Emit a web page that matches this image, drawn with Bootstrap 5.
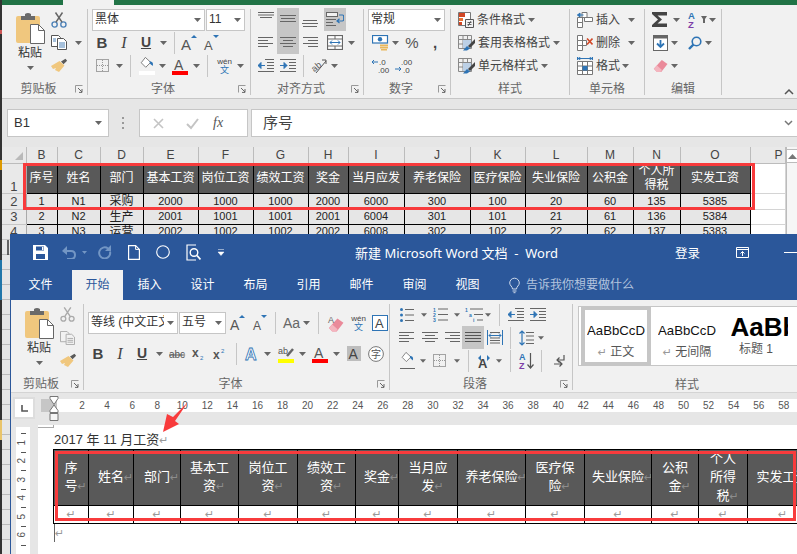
<!doctype html>
<html lang="zh-CN">
<head>
<meta charset="utf-8">
<title>Excel 与 Word</title>
<link href="https://cdn.jsdelivr.net/npm/bootstrap@5.3.0/dist/css/bootstrap.min.css" rel="stylesheet">
<style>
html,body{margin:0;height:100%;background:#2a2a2a;overflow:hidden}
.stage{position:relative;width:797px;height:554px;overflow:hidden;font:12px/1.2 "Liberation Sans","Noto Sans CJK SC",sans-serif;color:#444;background:linear-gradient(#333 0 30px,#c55 30px 34px,#333 34px 160px,#d90 160px 170px,#333 170px 260px,#27a 260px 300px,#333 300px 420px,#e9c46a 420px 440px,#333 440px)}
svg{display:block;flex-shrink:0;overflow:visible}
.l1{margin-left:1px}.l2{margin-left:2px}.l3{margin-left:3px}.l4{margin-left:4px}.l5{margin-left:5px}.l6{margin-left:6px}.l7{margin-left:7px}.l8{margin-left:8px}.l9{margin-left:9px}.l10{margin-left:10px}.l11{margin-left:11px}.l12{margin-left:12px}.l13{margin-left:13px}.l14{margin-left:14px}.l16{margin-left:16px}.l17{margin-left:17px}.l22{margin-left:22px}
.u14{width:14px}.u16{width:16px}.u18{width:18px}.u22{width:22px}
.xlw{margin-left:2px;width:795px;height:554px;display:flex;flex-direction:column;background:#e6e6e6}
.xtop{height:5px;display:flex;background:#217346;flex-shrink:0}
.xtab{width:51px;margin-left:61px;background:#f1f1f1}
.rib{height:94px;flex-shrink:0;display:flex;padding-top:3px;background:#f1f1f1;border-bottom:1px solid #c6c6c6}
.rg{height:86px;flex-shrink:0;border-right:1px solid #c6c6c6;margin-top:1px}
.rb{height:69px;margin-top:-1px}
.rl{display:flex;align-items:center;height:14px;margin-top:5px;color:#666}
.rlt{flex:1;text-align:center}
.rl svg{margin-right:4px}
.rr{display:flex;align-items:center;height:23px}
.rr2{display:flex;align-items:center;height:31px}
.tx{display:flex;align-items:center;justify-content:center;height:23px;flex-shrink:0}
.bi{font-weight:700;font-size:15px;color:#444}
.ii{font-style:italic;font-family:"Liberation Serif",serif;font-size:16px;color:#444}
.ui{font-weight:700;font-size:14px;text-decoration:underline;color:#444}
.on{background:#c6c6c6}
.vs{width:1px;height:22px;background:#c6c6c6;flex-shrink:0}
.sel{display:flex;align-items:center;height:22px;background:#fff;border:1px solid #c6c6c6;padding-left:2px;overflow:hidden;color:#333;flex-shrink:0}
.sel>span{flex:1;white-space:nowrap;overflow:hidden}
.sel>svg{margin:0 3px 0 3px}
.s113{width:113px}.s39{width:39px}.s77{width:77px}.s90{width:90px}.s47{width:47px}
.pcol{width:30px;display:flex;flex-direction:column;align-items:center;margin-left:13px;flex-shrink:0}
.pcol svg:first-child{margin-top:5px}
.pcol b{font-weight:400;line-height:16px;color:#333;margin-top:1px}
.pcol svg:last-child{margin-top:5px}
.pct{font-size:15px;color:#555}
.wen{display:flex;flex-direction:column;align-items:center;width:17px;flex-shrink:0;font-size:8px;line-height:9px;color:#444}
.wen b{font-weight:400;font-size:9px;line-height:9px;color:#2e74b5}
.ctext{margin-left:3px;padding-top:2px;color:#444;white-space:nowrap}
.gw86{width:86px}.gw163{width:163px}.gw113{width:113px}.gw87{width:87px}.gw119{width:119px}.gw75{width:75px}.gw77{width:77px}.gw73{width:73px}.gw306{width:306px}.gw183{width:183px}
.rend{flex:1;display:flex;justify-content:flex-end;align-items:flex-end;padding:0 3px 3px 0}
.fbar{height:44px;flex-shrink:0;display:flex;padding-top:10px;align-items:flex-start;background:#e6e6e6}
.fbox{height:28px;background:#fff;border:1px solid #c6c6c6;display:flex;align-items:center;flex-shrink:0}
.fnm{width:102px;margin-left:5px;padding-left:6px;font-size:13px;color:#333}
.fnm span{flex:1}
.fnm svg{margin-right:6px}
.fdots{margin-left:13px;margin-top:8px;width:2px;height:12px;background:repeating-linear-gradient(#999 0 2px,transparent 2px 5px)}
.ffx{width:109px;margin-left:15px}
.ffx i{font:italic 14px "Liberation Serif",serif;color:#555;margin-left:14px}
.fval{flex:1;margin-left:3px;margin-right:-2px;padding-left:11px;font-size:15px;color:#444}
.fval span{flex:1}
.fval svg{margin-right:5px}
.xsheet{display:flex;flex:1;min-height:0;padding-top:4px;background:#e6e6e6}
.xt.table{width:783px;table-layout:fixed;margin:0;border-collapse:collapse;--bs-table-bg:transparent;font-size:11px;color:#222}
.xt.table>:not(caption)>*>*{padding:0;border:1px solid #000;text-align:center;vertical-align:middle;box-shadow:none;line-height:1;overflow:hidden;white-space:nowrap}
.xt col:nth-child(1){width:24px}.xt col:nth-child(2){width:31px}.xt col:nth-child(3),.xt col:nth-child(4){width:43px}.xt col:nth-child(5),.xt col:nth-child(6),.xt col:nth-child(7),.xt col:nth-child(11){width:55px}.xt col:nth-child(8){width:40px}.xt col:nth-child(9){width:56px}.xt col:nth-child(10){width:66px}.xt col:nth-child(12){width:62px}.xt col:nth-child(13){width:46px}.xt col:nth-child(14){width:47px}.xt col:nth-child(15){width:70px}.xt col:nth-child(16){width:35px}
.h16{height:16px}.h30{height:30px}.h15{height:15px}
.xt.table>:not(caption)>*>.hd{background:#e9e9e9;border:0;border-right:1px solid #bcbcbc;border-bottom:1px solid #bcbcbc;color:#444;font-size:12px}
.xt.table>:not(caption)>*>.hrow{background:#e9e9e9;border:0;border-bottom:1px solid #c6c6c6;border-right:1px solid #aaa;color:#444;font-size:13px}
.xt.table>:not(caption)>*>.rb1{vertical-align:bottom}
.xt.table>:not(caption)>*>.dk{background:#595959;color:#fff;font-size:12px;line-height:14px;white-space:normal}
.xt.table>:not(caption)>*>.cn{font-size:12px}
.xt.table>:not(caption)>*>.pp{background:#fff;border:0;border-right:1px solid #d4d4d4;border-bottom:1px solid #d4d4d4;border-left:1px solid #000}
.xt.table>:not(caption)>*>.pend{text-align:right;padding-right:2px}
.corner{display:flex;justify-content:flex-end;align-items:flex-end;height:15px;padding:0 3px 2px 0}
.xfill{width:24px;height:316px;background:linear-gradient(90deg,transparent 5px,rgba(30,30,30,.65) 5px 7px,transparent 7px) 0 0/100% 15px no-repeat,repeating-linear-gradient(#e6e6e6 0 14px,#bcbcbc 14px 15px)}
.xscroll{width:12px;margin-left:0;display:flex;flex-direction:column;background:#f6f6f6;border-left:1px solid #bbb;flex-shrink:0}
.xup{height:14px;margin-top:2px;background:#fff;border:1px solid #bbb;border-width:1px 0;display:flex;align-items:center;justify-content:center}
.wdw{position:absolute;left:10px;top:234px;width:787px;height:320px;display:flex;flex-direction:column;background:#e6e6e6;border-left:1px solid #2b579a}
.wtitle{height:36px;flex-shrink:0;display:flex;align-items:center;background:#2b579a;color:#fff;font:13px "Noto Sans","Noto Sans CJK SC",sans-serif}
.wname{margin-left:131px;white-space:pre;width:204px;flex-shrink:0}
.wlog{margin-left:116px;font-size:12.5px;white-space:nowrap;flex-shrink:0}
.wrd{margin-left:36px}
.wmin{margin-left:35px;width:14px;height:1px;background:#fff}
.wtabs{height:30px;flex-shrink:0;display:flex;flex-wrap:nowrap;padding-left:3px;background:#2b579a;font-size:12px}
.wtabs li{width:53px;height:30px;display:flex;align-items:center;justify-content:center;color:#fff;flex-shrink:0}
.wtabs .won{width:51px;margin-left:5px;margin-right:0;background:#f1f1f1;color:#2b579a}
.wtell{display:flex;align-items:center;color:#b3c4de;margin-left:15px;gap:6px}
.wtabs .wtell{width:auto;color:#b3c4de}
.wrib{height:93px;flex-shrink:0;display:flex;padding-top:3px;background:#f1f1f1;border-bottom:1px solid #d4d4d4;overflow:hidden}
.wstyles{flex:1;margin-top:1px}
.gal{display:flex;height:60px;margin:2px -4px 0 5px;background:#fff;border:1px solid #c6c6c6;overflow:hidden}
.gi{width:70px;flex-shrink:0;display:flex;flex-direction:column;align-items:center;padding-top:15px;overflow:hidden;height:58px}
.gi1{border:3px solid #c6c6c6;border-width:3px 4px;padding-top:12px;margin-left:2px}
.gi2{width:62px;margin-left:5px}.gi3{width:62px;margin-left:10px;padding-top:4px}
.gs{font-size:13.2px;color:#111;width:58px;overflow:hidden;white-space:nowrap;height:18px;line-height:18px}
.gb{font-size:26px;font-weight:700;color:#000;width:57px;overflow:hidden;white-space:nowrap;line-height:32px;height:32px}
.gc{font-size:12px;margin-top:5px;color:#555;white-space:nowrap}
.gc3{margin-top:-1px;padding-right:6px}
.glabel{margin-top:12px;height:14px;text-align:center;color:#666;padding-left:4px}
.wruler{position:relative;height:32px;flex-shrink:0;display:flex;padding-top:6px;background:#e6e6e6}
.wcorn{width:18px;height:18px;margin:0 5px 0 4px;background:#fff;box-shadow:0 0 0 2px #ddd;display:flex;align-items:center;justify-content:center;margin-top:0}
.rgray{width:16px;height:13px;background:#c6c6c6;margin-left:3px;flex-shrink:0}
.rwhite{flex:1;height:13px;background:#fff;display:flex;padding-left:12.5px;overflow:hidden}
.rnum{width:25.07px;flex-shrink:0;text-align:center;font-size:10px;line-height:13px;color:#555}
.hour{position:absolute;left:38px;top:3px}
.wmain{flex:1;display:flex;min-height:0;overflow:hidden}
.vrw{width:27px;flex-shrink:0;padding:2px 8px 0 5px;background:#e6e6e6}
.vru{height:100%;background:#fff;padding-top:6px}
.vc{height:18.6px;position:relative;display:flex;align-items:center;justify-content:center;font-size:10px;color:#555;writing-mode:vertical-rl}
.vc::before{content:"";position:absolute;top:0;left:5px;width:5px;height:1px;background:#555}
.vc span{transform:rotate(180deg)}
.wpage{flex:1;background:#fff;padding-left:15px;overflow:hidden;min-width:0}
.crop{width:16px;height:3px;margin-left:-15px;border-bottom:1px solid #aaa;border-right:1px solid #aaa}
.ptitle{font-size:13px;line-height:17px;height:17px;margin:3px 0 1px 1px;color:#333;white-space:nowrap}
.pm{color:#999;font-family:"DejaVu Sans",sans-serif;font-size:11px;line-height:1}
.nw{white-space:nowrap}
.wt.table{width:764px;table-layout:fixed;margin:0;border-collapse:collapse;--bs-table-bg:transparent}
.wt.table>:not(caption)>*>*{padding:0 6px;border:1px solid #000;text-align:center;vertical-align:middle;box-shadow:none;line-height:18.3px;font-size:13px;overflow:hidden}
.wt col:nth-child(1){width:35px}.wt col:nth-child(2){width:45px}.wt col:nth-child(3){width:47px}.wt col:nth-child(4),.wt col:nth-child(6){width:58px}.wt col:nth-child(5),.wt col:nth-child(8),.wt col:nth-child(10){width:59px}.wt col:nth-child(7){width:43px}.wt col:nth-child(9){width:68px}.wt col:nth-child(11){width:67px}.wt col:nth-child(12){width:47px}.wt col:nth-child(13){width:49px}.wt col:nth-child(14){width:70px}
.wt.table>:not(caption)>*>.wd{background:#595959;color:#fff;height:55px}
.wt.table>:not(caption)>*>.wr2{height:18px;line-height:16px;text-align:center;background:#fff}
.wd .pm{color:#8d8d8d;margin-right:-9px}
.wlast{height:18px;margin-left:1px;margin-top:0;border-left:1px solid #666;padding-top:2px;line-height:14px}
.rf{position:absolute;border:3px solid #f83b3c;pointer-events:none}
.rf1{left:23px;top:163px;width:732px;height:47px}
.rf2{left:55px;top:451px;width:741px;height:70px}
.arw{position:absolute;left:160px;top:400px}
</style>
</head>
<body>
<svg width="0" height="0" class="position-absolute">
<defs>
<symbol id="cr" viewBox="0 0 7 4"><path d="M0 0h7L3.5 4z" fill="#666"/></symbol>
<symbol id="la" viewBox="0 0 8 8"><path d="M.5 7.5v-7h7" fill="none" stroke="#999"/><path d="M3 3l4 4M7 4v3.4H4" fill="none" stroke="#666"/></symbol>
<symbol id="pa" viewBox="0 0 29 31"><rect y="3" width="24" height="27" rx="2" fill="#f0c77e"/><path d="M5 7V3h4V1q3-2 6 0v2h4v4z" fill="#6a6a6a"/><path d="M14.5 11.5h8l6 6v13h-14z" fill="#fff" stroke="#666"/><path d="M22.5 11.5v6h6" fill="none" stroke="#666"/></symbol>
<symbol id="sc" viewBox="0 0 16 16"><circle cx="3.6" cy="12.5" r="2.6" fill="none" stroke="#4d82b8" stroke-width="1.4"/><circle cx="12.4" cy="12.5" r="2.6" fill="none" stroke="#4d82b8" stroke-width="1.4"/><path d="M5 10.2L11.5.5M11 10.2L4.5.5" stroke="#666" stroke-width="1.5"/></symbol>
<symbol id="scg" viewBox="0 0 16 16"><circle cx="3.6" cy="12.5" r="2.6" fill="none" stroke="#aaa" stroke-width="1.4"/><circle cx="12.4" cy="12.5" r="2.6" fill="none" stroke="#aaa" stroke-width="1.4"/><path d="M5 10.2L11.5.5M11 10.2L4.5.5" stroke="#aaa" stroke-width="1.5"/></symbol>
<symbol id="cp" viewBox="0 0 16 15"><path d="M.5.5h7l2 2v9h-9z" fill="#fff" stroke="#555"/><path d="M6.5 3.5h6l3 3v8h-9z" fill="#fff" stroke="#555"/><path d="M8 8h6M8 10h6M8 12h6M2 4h3M2 6h3" stroke="#4d82b8"/></symbol>
<symbol id="cpg" viewBox="0 0 16 15"><path d="M.5.5h7l2 2v9h-9z" fill="#f1f1f1" stroke="#aaa"/><path d="M6.5 3.5h6l3 3v8h-9z" fill="#f1f1f1" stroke="#aaa"/><path d="M8 8h6M8 10h6M8 12h6" stroke="#aaa"/></symbol>
<symbol id="br" viewBox="0 0 17 15"><path d="M10 3.5L14.5.8l1.6 2-3.6 3.4z" fill="#5a5a5a"/><path d="M8.5 3l5 4.5L8 14 4 12l1-2-3 1-2-3z" fill="#f0c77e"/></symbol>
<symbol id="v1" viewBox="0 0 16 23"><path d="M0 4.5h16M0 7h16M2 9.5h12" stroke="#666"/></symbol>
<symbol id="v2" viewBox="0 0 16 23"><path d="M0 7.5h16M1 10.5h14M0 13.5h16" stroke="#666"/></symbol>
<symbol id="v3" viewBox="0 0 16 23"><path d="M1 12.5h14M0 15.5h16M1 18.5h14" stroke="#666"/></symbol>
<symbol id="al" viewBox="0 0 16 11"><path d="M0 .5h15M0 3.5h10M0 6.5h15M0 9.5h10" stroke="#666"/></symbol>
<symbol id="ac" viewBox="0 0 16 11"><path d="M0 .5h16M3 3.5h10M0 6.5h16M3 9.5h10" stroke="#666"/></symbol>
<symbol id="ar" viewBox="0 0 16 11"><path d="M1 .5h15M6 3.5h10M1 6.5h15M6 9.5h10" stroke="#666"/></symbol>
<symbol id="aj" viewBox="0 0 16 11"><path d="M0 .5h16M0 3.5h16M0 6.5h16M0 9.5h16" stroke="#555"/></symbol>
<symbol id="wr" viewBox="0 0 18 16"><rect x=".5" y=".5" width="11" height="4" fill="#f1f1f1" stroke="#666"/><path d="M0 7.5h10M0 10.5h7M0 13.5h10" stroke="#666"/><path d="M13 3h3.5q1.2 0 1.2 1.5v3q0 1.5-1.5 1.5H11m2.5-2.2L11 9l2.5 2" fill="none" stroke="#2e74b5" stroke-width="1.2"/></symbol>
<symbol id="mg" viewBox="0 0 16 15"><rect x=".5" y=".5" width="15" height="14" fill="#fff" stroke="#666" stroke-width="1.2"/><path d="M1 4h14M1 11h14M8 1v3M8 11v3" stroke="#666"/><path d="M3 7.5h10M3 7.5l2-2M3 7.5l2 2M13 7.5l-2-2M13 7.5l-2 2" fill="none" stroke="#2e74b5"/></symbol>
<symbol id="il" viewBox="0 0 16 13"><path d="M7 .5h9M9 3.5h7M9 6.5h7M9 9.5h7M0 12.5h16" stroke="#666"/><path d="M0 6.5h7M0 6.5l3-3v6z" stroke="#2e74b5" fill="#2e74b5"/></symbol>
<symbol id="ir" viewBox="0 0 16 13"><path d="M0 .5h16M9 3.5h7M9 6.5h7M9 9.5h7M0 12.5h16" stroke="#666"/><path d="M0 6.5h7M7 6.5l-3-3v6z" stroke="#2e74b5" fill="#2e74b5"/></symbol>
<symbol id="bo" viewBox="0 0 13 13"><rect x=".5" y=".5" width="12" height="12" fill="none" stroke="#555" stroke-dasharray="1 1"/><path d="M6.5 1v11M1 6.5h11" stroke="#999" stroke-dasharray="1 1"/></symbol>
<symbol id="fi" viewBox="0 0 16 17"><path d="M6 .5l6.5 6-6 6-5.5-5.5z" fill="#fff" stroke="#666"/><path d="M11 5l3 1c1.5 1 1.5 3 1 5-1-1-3-2-3.5-3z" fill="#2e74b5"/></symbol>
<symbol id="mo" viewBox="0 0 17 16"><rect x=".5" y=".5" width="15" height="7.5" fill="#fff" stroke="#2e74b5" stroke-width="1.2"/><circle cx="8" cy="4.2" r="2.2" fill="#2e74b5"/><path d="M8 9.5h8v2H8zM8 12h8v1.6H8zM9 14h6v1.6H9z" fill="#e9b85c"/></symbol>
<symbol id="cf" viewBox="0 0 16 16"><path d="M.5.5h12v13H.5z" fill="#fff" stroke="#777"/><path d="M1 1h6v4H1z" fill="#d24726"/><path d="M1 6h4v3H1z" fill="#e97132"/><path d="M1 10h3v3H1z" fill="#d24726"/><path d="M7.5 7.5h8v8h-8z" fill="#f1f1f1" stroke="#555"/><path d="M9.5 10.5h4M9.5 12.5h4M10 14l3-5" stroke="#444" stroke-width=".8"/></symbol>
<symbol id="tf" viewBox="0 0 17 16"><path d="M.5.5h13v13H.5zM.5 4.5h13M.5 9h13M5 .5v13M9.5.5v13" fill="none" stroke="#888"/><path d="M5 5h8v8H5z" fill="#bcd0e6"/><path d="M17 4l-7 7 2 2 5-5z" fill="#444"/><path d="M9 11l3 2.500-3 2H5z" fill="#2e74b5"/></symbol>
<symbol id="in" viewBox="0 0 16 16"><path d="M5 .5h5v5H5zM.5 5.5h5v5h-5zM.5 10.500h5v5h-5z" fill="#fff" stroke="#777"/><path d="M7.500 5.500h8v4h-8z" fill="#fff" stroke="#777"/><path d="M.5 3h6M.5 3l2.500-2v4z" stroke="#2e74b5" fill="#2e74b5"/></symbol>
<symbol id="de" viewBox="0 0 16 16"><path d="M.5.5h5v5h-5zM.5 5.500h5v5h-5zM.500 10.500h5v5h-5zM5.500 5.500h4v5h-4z" fill="#fff" stroke="#777"/><path d="M10 3.500l5.500 6M15.500 3.500L10 9.500" stroke="#d24726" stroke-width="1.6"/></symbol>
<symbol id="fo" viewBox="0 0 16 18"><path d="M1 1.500h14M1 1.500l2-1v2zM15 1.500l-2-1v2zM.5 0v3M15.500 0v3" fill="none" stroke="#2e74b5"/><path d="M.5 4.500h15v13H.500zM.5 9h15M.5 13.500h15M5.500 4.500v13M10.500 4.500v13" fill="#fff" stroke="#777"/><path d="M5.500 9h5v4.500h-5z" fill="#2e74b5"/></symbol>
<symbol id="sg" viewBox="0 0 15 15"><path d="M0 0h15v3.500H5.500L10 7.500 5.500 11.500H15V15H0v-2l6-5.500L0 2z" fill="#444"/></symbol>
<symbol id="fd" viewBox="0 0 15 16"><rect x=".5" y=".5" width="14" height="15" fill="#fff" stroke="#666"/><path d="M1 1h13v2.500H1z" fill="#666"/><path d="M7.500 5v7M4 8.500l3.500 3.500L11 8.500" fill="none" stroke="#2e74b5" stroke-width="1.800"/></symbol>
<symbol id="fn" viewBox="0 0 14 14"><circle cx="8.500" cy="5.500" r="4.300" fill="none" stroke="#2e74b5" stroke-width="1.600"/><path d="M5.500 8.500L1 13" stroke="#2e74b5" stroke-width="2.400"/></symbol>
<symbol id="er" viewBox="0 0 15 14"><path d="M8.800 1l5.700 4-6.300 8H4L.8 9.800z" fill="#ea8a9a"/><path d="M.800 9.800L4 6.500 9 11l-1.500 2H4z" fill="#f4b5bf"/></symbol>
<symbol id="sv" viewBox="0 0 15 15"><path d="M0 0h12l3 3v12H0z" fill="#fff"/><path d="M3 1.500h8v4H3zM3 9h9v5H3z" fill="#2b579a"/><path d="M9 2h1.500v3H9z" fill="#fff"/></symbol>
<symbol id="un" viewBox="0 0 14 13"><path d="M3 5h6q4 0 4 4t-4 4H5" fill="none" stroke="#7396c4" stroke-width="2"/><path d="M5 0v9L0 5z" fill="#7396c4"/></symbol>
<symbol id="re" viewBox="0 0 14 14"><path d="M10 3.500a5.500 5.500 0 1 0 2 3" fill="none" stroke="#7396c4" stroke-width="2"/><path d="M13 0v6H7z" fill="#7396c4"/></symbol>
<symbol id="nd" viewBox="0 0 12 15"><path d="M.6.6h7l3.800 3.800V14.400H.6z" fill="none" stroke="#fff" stroke-width="1.200"/><path d="M7.600.6v3.800h3.800" fill="none" stroke="#fff"/></symbol>
<symbol id="pv" viewBox="0 0 15 17"><path d="M10 1H1v15h9" fill="none" stroke="#fff" stroke-width="1.200"/><circle cx="8" cy="8.500" r="3.800" fill="none" stroke="#fff" stroke-width="1.400"/><path d="M11 11.500l3.500 4" stroke="#fff" stroke-width="1.800"/></symbol>
<symbol id="rd" viewBox="0 0 13 11"><path d="M.5.5h12v10H.500zM.5 2.500h12" fill="none" stroke="#fff"/><path d="M6.500 9V4.500M4.500 6.500l2-2 2 2" fill="none" stroke="#fff"/></symbol>
<symbol id="bu" viewBox="0 0 14 14"><circle cx="1.500" cy="1.500" r="1.500" fill="#2e74b5"/><circle cx="1.500" cy="7" r="1.500" fill="#2e74b5"/><circle cx="1.500" cy="12.500" r="1.500" fill="#2e74b5"/><path d="M5 1.500h9M5 7h9M5 12.500h9" stroke="#666"/></symbol>
<symbol id="ds" viewBox="0 0 16 15"><path d="M.5 0v15M15.500 0v15" stroke="#2e74b5"/><path d="M3 2.500h10M3 8h10M3 10.500h10M3 13h10" stroke="#666"/><path d="M2 5.500h12M2 5.500l2-2M2 5.500l2 2M14 5.500l-2-2M14 5.500l-2 2" fill="none" stroke="#2e74b5"/></symbol>
<symbol id="ls" viewBox="0 0 15 16"><path d="M3 1v14M.5 3.500L3 1l2.500 2.500M.5 12.500L3 15l2.500-2.500" fill="none" stroke="#2e74b5" stroke-width="1.200"/><path d="M7 2.500h8M7 6h8M7 10h8M7 13.500h8" stroke="#666"/></symbol>
<symbol id="pg" viewBox="0 0 11 12"><path d="M10 0v5H3M5.500 2.500L3 5l2.500 2.500M0 9h8M5.500 6.500L8 9l-2.500 2.500" fill="none" stroke="#555" stroke-width="1.200"/></symbol>
</defs>
</svg>

<main class="stage">
  <!-- Excel -->
  <section class="xlw">
    <div class="xtop"><div class="xtab"></div></div>
    <div class="rib">
      <div class="rg gw86">
        <div class="rb d-flex">
          <div class="pcol"><svg width="29" height="31"><use href="#pa"/></svg><b>粘贴</b><svg width="7" height="4"><use href="#cr"/></svg></div>
          <div class="l6">
            <div class="rr"><svg width="16" height="16"><use href="#sc"/></svg></div>
            <div class="rr"><svg width="16" height="15"><use href="#cp"/></svg><svg class="l8" width="7" height="4"><use href="#cr"/></svg></div>
            <div class="rr"><svg width="17" height="15"><use href="#br"/></svg></div>
          </div>
        </div>
        <div class="rl"><span class="rlt">剪贴板</span><svg width="8" height="8"><use href="#la"/></svg></div>
      </div>
      <div class="rg gw163">
        <div class="rb">
          <div class="rr"><div class="sel s113 l4"><span>黑体</span><svg width="7" height="4"><use href="#cr"/></svg></div><div class="sel s39 l1"><span>11</span><svg width="7" height="4"><use href="#cr"/></svg></div></div>
          <div class="rr"><span class="tx u14 l7 bi">B</span><span class="tx u14 l8 ii">I</span><span class="tx u14 l8 ui">U</span><svg class="l7" width="7" height="4"><use href="#cr"/></svg><i class="vs l7"></i>
            <svg class="l6" width="18" height="18"><text x="0" y="16" font-family="Liberation Sans" font-size="15" fill="#555">A</text><path d="M10 4l3-3 3 3z" fill="#2e74b5"/></svg>
            <svg class="l4" width="18" height="18"><text x="1" y="16" font-family="Liberation Sans" font-size="13" fill="#555">A</text><path d="M10 1h6l-3 3z" fill="#2e74b5"/></svg></div>
          <div class="rr"><svg class="l8" width="13" height="13"><use href="#bo"/></svg><svg class="l7" width="7" height="4"><use href="#cr"/></svg><i class="vs l7"></i>
            <svg class="l8" width="16" height="18"><use href="#fi" width="16" height="14"/><rect y="14" width="16" height="4" fill="#fff"/></svg><svg class="l4" width="7" height="4"><use href="#cr"/></svg>
            <svg class="l6" width="16" height="18"><text x="2" y="12.500" font-family="Liberation Sans" font-size="14" fill="#555">A</text><rect y="14" width="16" height="4" fill="#f00"/></svg><svg class="l5" width="7" height="4"><use href="#cr"/></svg><i class="vs l7"></i>
            <div class="wen l8"><span>wén</span><b>文</b></div><svg class="l4" width="7" height="4"><use href="#cr"/></svg></div>
        </div>
        <div class="rl"><span class="rlt">字体</span><svg width="8" height="8"><use href="#la"/></svg></div>
      </div>
      <div class="rg gw113">
        <div class="rb">
          <div class="rr"><span class="tx u22 l4"><svg width="16" height="23"><use href="#v1"/></svg></span><span class="tx u22 on"><svg width="16" height="23"><use href="#v2"/></svg></span><span class="tx u22"><svg width="16" height="23"><use href="#v3"/></svg></span><span class="tx u22 on l3"><svg width="18" height="16"><use href="#wr"/></svg></span></div>
          <div class="rr"><span class="tx u22 l4"><svg width="16" height="11"><use href="#al"/></svg></span><span class="tx u22 on"><svg width="16" height="11"><use href="#ac"/></svg></span><span class="tx u22"><svg width="16" height="11"><use href="#ar"/></svg></span><span class="tx u22 l3"><svg width="16" height="15"><use href="#mg"/></svg></span><svg class="l2" width="7" height="4"><use href="#cr"/></svg></div>
          <div class="rr"><span class="tx u22 l4"><svg width="16" height="13"><use href="#il"/></svg></span><span class="tx u22"><svg width="16" height="13"><use href="#ir"/></svg></span><i class="vs l4"></i>
            <svg class="l7" width="16" height="17"><text x="0" y="12" font-family="Liberation Sans" font-size="9" fill="#555" transform="rotate(-40 6 9)">ab</text><path d="M5 16L15 4M11 3h4v4" fill="none" stroke="#555"/></svg><svg class="l4" width="7" height="4"><use href="#cr"/></svg></div>
        </div>
        <div class="rl"><span class="rlt">对齐方式</span><svg width="8" height="8"><use href="#la"/></svg></div>
      </div>
      <div class="rg gw87">
        <div class="rb">
          <div class="rr"><div class="sel s77 l4"><span>常规</span><svg width="7" height="4"><use href="#cr"/></svg></div></div>
          <div class="rr"><svg class="l8" width="17" height="16"><use href="#mo"/></svg><svg class="l3" width="7" height="4"><use href="#cr"/></svg><span class="tx u18 l4 pct">%</span><span class="tx u14 l7 bi">,</span></div>
          <div class="rr"><svg class="l8" width="20" height="16"><path d="M0 4h6M0 4l2-2M0 4l2 2" fill="none" stroke="#2e74b5"/><text x="7" y="7" font-size="8" font-family="Liberation Sans" fill="#444">.0</text><text x="6" y="15" font-size="8" font-family="Liberation Sans" fill="#444">.00</text></svg><svg class="l3" width="20" height="16"><text x="6" y="7" font-size="8" font-family="Liberation Sans" fill="#444">.00</text><path d="M0 11h6M6 11l-2-2M6 11l-2 2" fill="none" stroke="#2e74b5"/><text x="8" y="15" font-size="8" font-family="Liberation Sans" fill="#444">.0</text></svg></div>
        </div>
        <div class="rl"><span class="rlt">数字</span><svg width="8" height="8"><use href="#la"/></svg></div>
      </div>
      <div class="rg gw119">
        <div class="rb">
          <div class="rr"><svg class="l7" width="16" height="16"><use href="#cf"/></svg><span class="ctext">条件格式</span><svg class="l3" width="7" height="4"><use href="#cr"/></svg></div>
          <div class="rr"><svg class="l7" width="17" height="16"><use href="#tf"/></svg><span class="ctext">套用表格格式</span><svg class="l3" width="7" height="4"><use href="#cr"/></svg></div>
          <div class="rr"><svg class="l7" width="17" height="16"><use href="#tf"/></svg><span class="ctext">单元格样式</span><svg class="l3" width="7" height="4"><use href="#cr"/></svg></div>
        </div>
        <div class="rl"><span class="rlt">样式</span></div>
      </div>
      <div class="rg gw75">
        <div class="rb">
          <div class="rr"><svg class="l7" width="16" height="16"><use href="#in"/></svg><span class="ctext">插入</span><svg class="l8" width="7" height="4"><use href="#cr"/></svg></div>
          <div class="rr"><svg class="l7" width="16" height="16"><use href="#de"/></svg><span class="ctext">删除</span><svg class="l8" width="7" height="4"><use href="#cr"/></svg></div>
          <div class="rr"><svg class="l7" width="16" height="18"><use href="#fo"/></svg><span class="ctext">格式</span><svg class="l2" width="7" height="4"><use href="#cr"/></svg></div>
        </div>
        <div class="rl"><span class="rlt">单元格</span></div>
      </div>
      <div class="rg gw77">
        <div class="rb">
          <div class="rr"><svg class="l7" width="15" height="15"><use href="#sg"/></svg><svg class="l6" width="7" height="4"><use href="#cr"/></svg><svg class="l8" width="13" height="18"><text x="0" y="8" font-family="Liberation Sans" font-size="9.500" font-weight="700" fill="#2e74b5">A</text><text x="0" y="17" font-family="Liberation Sans" font-size="9.500" font-weight="700" fill="#7e3fa8">Z</text></svg><svg width="6" height="7"><path d="M0 0h6L4 3v4H2V3z" fill="#666"/></svg><svg class="l2" width="7" height="4"><use href="#cr"/></svg></div>
          <div class="rr"><svg class="l8" width="15" height="16"><use href="#fd"/></svg><svg class="l3" width="7" height="4"><use href="#cr"/></svg><svg class="l10" width="14" height="14"><use href="#fn"/></svg><svg class="l3" width="7" height="4"><use href="#cr"/></svg></div>
          <div class="rr"><svg class="l8" width="15" height="14"><use href="#er"/></svg><svg class="l3" width="7" height="4"><use href="#cr"/></svg></div>
        </div>
        <div class="rl"><span class="rlt">编辑</span></div>
      </div>
      <div class="rend"><svg width="10" height="6"><path d="M1 5l4-4 4 4" fill="none" stroke="#555" stroke-width="1.500"/></svg></div>
    </div>
    <div class="fbar">
      <div class="fbox fnm"><span>B1</span><svg width="7" height="4"><use href="#cr"/></svg></div>
      <div class="fdots"></div>
      <div class="fbox ffx"><svg class="l13" width="11" height="11"><path d="M1 1l9 9M10 1l-9 9" stroke="#c4c4c4" stroke-width="1.600"/></svg><svg class="l22" width="13" height="11"><path d="M1 6l4 4 7-9" fill="none" stroke="#c4c4c4" stroke-width="2"/></svg><i>fx</i></div>
      <div class="fbox fval"><span>序号</span><svg width="9" height="6"><path d="M1 1l3.500 3.500L8 1" fill="none" stroke="#777" stroke-width="1.500"/></svg></div>
    </div>
    <div class="xsheet">
      <div>
        <table class="table xt">
          <colgroup><col><col><col><col><col><col><col><col><col><col><col><col><col><col><col><col></colgroup>
          <tbody>
            <tr class="h16"><td class="hd"><div class="corner"><svg width="8" height="8"><path d="M8 0v8H0z" fill="#b9b9b9"/></svg></div></td><td class="hd">B</td><td class="hd">C</td><td class="hd">D</td><td class="hd">E</td><td class="hd">F</td><td class="hd">G</td><td class="hd">H</td><td class="hd">I</td><td class="hd">J</td><td class="hd">K</td><td class="hd">L</td><td class="hd">M</td><td class="hd">N</td><td class="hd">O</td><td class="hd pend">P</td></tr>
            <tr class="h30"><td class="hrow rb1">1</td><td class="dk">序号</td><td class="dk">姓名</td><td class="dk">部门</td><td class="dk">基本工资</td><td class="dk">岗位工资</td><td class="dk">绩效工资</td><td class="dk">奖金</td><td class="dk">当月应发</td><td class="dk">养老保险</td><td class="dk">医疗保险</td><td class="dk">失业保险</td><td class="dk">公积金</td><td class="dk">个人所得税</td><td class="dk">实发工资</td><td class="pp"></td></tr>
            <tr class="h16"><td class="hrow">2</td><td>1</td><td>N1</td><td class="cn">采购</td><td>2000</td><td>1000</td><td>1000</td><td>2000</td><td>6000</td><td>300</td><td>100</td><td>20</td><td>60</td><td>135</td><td>5385</td><td class="pp"></td></tr>
            <tr class="h15"><td class="hrow">3</td><td>2</td><td>N2</td><td class="cn">生产</td><td>2001</td><td>1001</td><td>1001</td><td>2001</td><td>6004</td><td>301</td><td>101</td><td>21</td><td>61</td><td>136</td><td>5384</td><td class="pp"></td></tr>
            <tr class="h15"><td class="hrow">4</td><td>3</td><td>N3</td><td class="cn">运营</td><td>2002</td><td>1002</td><td>1002</td><td>2002</td><td>6008</td><td>302</td><td>102</td><td>22</td><td>62</td><td>137</td><td>5383</td><td class="pp"></td></tr>
          </tbody>
        </table>
        <div class="xfill"></div>
      </div>
      <div class="xscroll"><div class="xup"><svg width="9" height="5"><path d="M0 5l4.500-5L9 5z" fill="#777"/></svg></div></div>
    </div>
  </section>

  <!-- Word -->
  <section class="wdw">
    <div class="wtitle">
      <svg class="l22" width="15" height="15"><use href="#sv"/></svg>
      <svg class="l14" width="14" height="13"><use href="#un"/></svg>
      <svg class="l6" width="5" height="3"><path d="M0 0h5L2.500 3z" fill="#7396c4"/></svg>
      <svg class="l11" width="14" height="14"><use href="#re"/></svg>
      <svg class="l16" width="12" height="15"><use href="#nd"/></svg>
      <svg class="l16" width="14" height="14"><circle cx="7" cy="7" r="6.300" fill="none" stroke="#fff" stroke-width="1.100"/></svg>
      <svg class="l16" width="15" height="17"><use href="#pv"/></svg>
      <svg class="l17" width="6" height="7"><path d="M0 .5h6M0 3h6L3 6.500z" fill="#fff" stroke="#fff" stroke-width=".5"/></svg>
      <span class="wname">新建 Microsoft Word 文档  -  Word</span>
      <span class="wlog">登录</span>
      <svg class="wrd" width="13" height="11"><use href="#rd"/></svg>
      <i class="wmin"></i>
    </div>
    <ul class="nav wtabs">
      <li>文件</li><li class="won">开始</li><li>插入</li><li>设计</li><li>布局</li><li>引用</li><li>邮件</li><li>审阅</li><li>视图</li>
      <li class="wtell"><svg width="11" height="15"><path d="M3.500 11C3.500 8.500.7 7.500.7 5a4.800 4.800 0 0 1 9.600 0c0 2.500-2.800 3.500-2.800 6zM3.500 13h4M4.500 14.700h2" fill="none" stroke="#cfdbec"/></svg><span>告诉我你想要做什么</span></li>
    </ul>
    <div class="wrib">
      <div class="rg gw73">
        <div class="rb d-flex">
          <div class="pcol"><svg width="29" height="31"><use href="#pa"/></svg><b>粘贴</b><svg width="7" height="4"><use href="#cr"/></svg></div>
          <div class="l6">
            <div class="rr"><svg width="15" height="15"><use href="#scg"/></svg></div>
            <div class="rr"><svg width="15" height="14"><use href="#cpg"/></svg></div>
            <div class="rr"><svg width="17" height="15"><use href="#br"/></svg></div>
          </div>
        </div>
        <div class="rl"><span class="rlt">剪贴板</span><svg width="8" height="8"><use href="#la"/></svg></div>
      </div>
      <div class="rg gw306">
        <div class="rb pt-1">
          <div class="rr2"><div class="sel s90 l4"><span>等线 (中文正文</span><svg width="7" height="4"><use href="#cr"/></svg></div><div class="sel s47 l1"><span>五号</span><svg width="7" height="4"><use href="#cr"/></svg></div>
            <svg class="l4" width="16" height="18"><text x="0" y="16" font-family="Liberation Sans" font-size="14" fill="#555">A</text><path d="M9 4l3-3 3 3z" fill="#2e74b5"/></svg>
            <svg class="l6" width="16" height="18"><text x="1" y="16" font-family="Liberation Sans" font-size="12" fill="#555">A</text><path d="M9 1h6l-3 3z" fill="#2e74b5"/></svg>
            <i class="vs l7"></i><span class="tx u16 l7" ><svg width="16" height="16"><text x="0" y="13" font-family="Liberation Sans" font-size="14" fill="#666">Aa</text></svg></span><svg class="l4" width="7" height="4"><use href="#cr"/></svg><i class="vs l8"></i>
            <svg class="l9" width="16" height="16"><use href="#er" y="2"/><text x="0" y="8" font-family="Liberation Sans" font-size="9" fill="#666">A</text></svg>
            <div class="wen l6"><span>wén</span><b>文</b></div>
            <svg class="l5" width="16" height="16"><rect x=".5" y=".5" width="15" height="15" fill="#fff" stroke="#2e74b5"/><text x="3" y="13" font-family="Liberation Sans" font-size="13" fill="#444">A</text></svg></div>
          <div class="rr2"><span class="tx u14 l7 bi">B</span><span class="tx u14 l8 ii">I</span><span class="tx u14 l8 ui">U</span><svg class="l7" width="7" height="4"><use href="#cr"/></svg>
            <svg class="l6" width="16" height="12"><text x="0" y="10" font-family="Liberation Sans" font-size="10" fill="#555" text-decoration="line-through">abc</text></svg>
            <svg class="l7" width="14" height="14"><text x="0" y="10" font-family="Liberation Sans" font-size="12" font-weight="700" fill="#555">x</text><text x="8" y="13" font-family="Liberation Sans" font-size="6" fill="#2e74b5">2</text></svg>
            <svg class="l7" width="15" height="14"><text x="0" y="12" font-family="Liberation Sans" font-size="12" font-weight="700" fill="#555">x</text><text x="8" y="6" font-family="Liberation Sans" font-size="6" fill="#2e74b5">2</text></svg>
            <i class="vs l8"></i>
            <svg class="l8" width="15" height="16"><text x="0" y="14" font-family="Liberation Sans" font-size="16" font-weight="700" fill="#fff" stroke="#2e74b5" stroke-width=".8">A</text></svg><svg class="l4" width="7" height="4"><use href="#cr"/></svg>
            <svg class="l7" width="16" height="18"><text x="0" y="9" font-family="Liberation Sans" font-size="9" fill="#555">ab</text><path d="M9 11l6-7" stroke="#666" stroke-width="2.500"/><rect y="14" width="16" height="4" fill="#ff0"/></svg><svg class="l5" width="7" height="4"><use href="#cr"/></svg>
            <svg class="l6" width="16" height="18"><text x="2" y="12.500" font-family="Liberation Sans" font-size="14" fill="#555">A</text><rect y="14" width="16" height="4" fill="#f00"/></svg><svg class="l5" width="7" height="4"><use href="#cr"/></svg>
            <svg class="l7" width="14" height="15"><rect width="14" height="15" fill="#bdbdbd"/><text x="1.500" y="13" font-family="Liberation Sans" font-size="14" fill="#444">A</text></svg>
            <svg class="l7" width="16" height="16"><circle cx="8" cy="8" r="7.400" fill="#fff" stroke="#777"/><text x="3" y="12" font-family="Noto Sans CJK SC" font-size="10" fill="#555">字</text></svg></div>
        </div>
        <div class="rl"><span class="rlt">字体</span><svg width="8" height="8"><use href="#la"/></svg></div>
      </div>
      <div class="rg gw183">
        <div class="rb">
          <div class="rr"><svg class="l10" width="14" height="14"><use href="#bu"/></svg><svg class="l7" width="6" height="4"><use href="#cr"/></svg>
            <svg class="l6" width="15" height="15"><text x="0" y="4.500" font-size="5" font-family="Liberation Sans" font-weight="700" fill="#2e74b5">1</text><text x="0" y="9.800" font-size="5" font-family="Liberation Sans" font-weight="700" fill="#2e74b5">2</text><text x="0" y="15" font-size="5" font-family="Liberation Sans" font-weight="700" fill="#2e74b5">3</text><path d="M5 2h10M5 7.500h10M5 13h10" stroke="#666"/></svg><svg class="l6" width="6" height="4"><use href="#cr"/></svg>
            <svg class="l5" width="18" height="15"><text x="0" y="4.500" font-size="5" font-family="Liberation Sans" font-weight="700" fill="#2e74b5">1</text><text x="4" y="9.800" font-size="5" font-family="Liberation Sans" font-weight="700" fill="#2e74b5">a</text><text x="8" y="15" font-size="5" font-family="Liberation Sans" font-weight="700" fill="#2e74b5">i</text><path d="M5 2h13M9 7.500h9M12 13h6" stroke="#666"/></svg><svg class="l2" width="6" height="4"><use href="#cr"/></svg><i class="vs l8"></i><svg class="l8" width="16" height="13"><use href="#il"/></svg><svg class="l6" width="16" height="13"><use href="#ir"/></svg></div>
          <div class="rr"><svg class="l9" width="16" height="11"><use href="#al"/></svg><svg class="l7" width="16" height="11"><use href="#ac"/></svg><svg class="l6" width="16" height="11"><use href="#ar"/></svg><span class="tx u22 on l2"><svg width="16" height="11"><use href="#aj"/></svg></span><svg class="l3" width="16" height="15"><use href="#ds"/></svg><i class="vs l7"></i><svg class="l8" width="15" height="16"><use href="#ls"/></svg><svg class="l4" width="6" height="4"><use href="#cr"/></svg></div>
          <div class="rr"><svg class="l10" width="15" height="17"><use href="#fi" width="15" height="13"/><path d="M0 16.500h15" stroke="#666"/></svg><svg class="l5" width="6" height="4"><use href="#cr"/></svg><svg class="l7" width="13" height="13"><use href="#bo"/></svg><svg class="l8" width="6" height="4"><use href="#cr"/></svg><i class="vs l8"></i>
            <svg class="l7" width="16" height="15"><path d="M2 5l3-3v6zM14 5l-3-3v6z" fill="#2e74b5"/><text x="2" y="15" font-family="Liberation Sans" font-size="13" font-weight="700" fill="#444">A</text></svg><svg class="l4" width="6" height="4"><use href="#cr"/></svg><i class="vs l8"></i>
            <svg class="l8" width="15" height="17"><text x="0" y="8" font-family="Liberation Sans" font-size="9" font-weight="700" fill="#2e74b5">A</text><text x="0" y="16.500" font-family="Liberation Sans" font-size="9" font-weight="700" fill="#7e3fa8">Z</text><path d="M11.500 1v15M8.500 12.500l3 3.500 3-3.500" fill="none" stroke="#555" stroke-width="1.200"/></svg><i class="vs l7"></i><svg class="l12" width="11" height="12"><use href="#pg"/></svg></div>
        </div>
        <div class="rl"><span class="rlt">段落</span><svg width="8" height="8"><use href="#la"/></svg></div>
      </div>
      <div class="wstyles">
        <div class="gal">
          <div class="gi gi1"><div class="gs">AaBbCcDd</div><div class="gc"><span class="pm">↵</span> 正文</div></div>
          <div class="gi gi2"><div class="gs">AaBbCcDd</div><div class="gc"><span class="pm">↵</span> 无间隔</div></div>
          <div class="gi gi3"><div class="gb">AaBbC</div><div class="gc gc3">标题 1</div></div>
        </div>
        <div class="glabel">样式</div>
      </div>
    </div>
    <div class="wruler">
      <div class="wcorn"><svg width="7" height="7"><path d="M1 0v6h6" fill="none" stroke="#555" stroke-width="1.600"/></svg></div>
      <div class="rgray"></div>
      <div class="rwhite"><span class="rnum">2</span><span class="rnum">4</span><span class="rnum">6</span><span class="rnum">8</span><span class="rnum">10</span><span class="rnum">12</span><span class="rnum">14</span><span class="rnum">16</span><span class="rnum">18</span><span class="rnum">20</span><span class="rnum">22</span><span class="rnum">24</span><span class="rnum">26</span><span class="rnum">28</span><span class="rnum">30</span><span class="rnum">32</span><span class="rnum">34</span><span class="rnum">36</span><span class="rnum">38</span><span class="rnum">40</span><span class="rnum">42</span><span class="rnum">44</span><span class="rnum">46</span><span class="rnum">48</span><span class="rnum">50</span><span class="rnum">52</span><span class="rnum">54</span><span class="rnum">56</span><span class="rnum">58</span></div>
      <svg class="hour" width="10" height="25"><path d="M1 .5h8v2L5 8.500 1 2.500zM5 9l4 5.500v2H1v-2z" fill="#fff" stroke="#777"/><path d="M1 17.500h8v7H1z" fill="#f6f6f6" stroke="#777"/></svg>
    </div>
    <div class="wmain">
      <div class="vrw"><div class="vru"><div class="vc"><span>1</span></div><div class="vc"><span>2</span></div><div class="vc"><span>3</span></div><div class="vc"><span>4</span></div><div class="vc"><span>5</span></div><div class="vc"><span>6</span></div><div class="vc"></div></div></div>
      <div class="wpage">
        <div class="crop"></div>
        <div class="ptitle">2017 年 11 月工资<span class="pm">↵</span></div>
        <table class="table wt">
          <colgroup><col><col><col><col><col><col><col><col><col><col><col><col><col><col></colgroup>
          <tbody>
            <tr><td class="wd">序<span class="nw">号<span class="pm">↵</span></span></td><td class="wd">姓<span class="nw">名<span class="pm">↵</span></span></td><td class="wd">部<span class="nw">门<span class="pm">↵</span></span></td><td class="wd">基本工<span class="nw">资<span class="pm">↵</span></span></td><td class="wd">岗位工<span class="nw">资<span class="pm">↵</span></span></td><td class="wd">绩效工<span class="nw">资<span class="pm">↵</span></span></td><td class="wd">奖<span class="nw">金<span class="pm">↵</span></span></td><td class="wd">当月应<span class="nw">发<span class="pm">↵</span></span></td><td class="wd">养老保<span class="nw">险<span class="pm">↵</span></span></td><td class="wd">医疗保<span class="nw">险<span class="pm">↵</span></span></td><td class="wd">失业保<span class="nw">险<span class="pm">↵</span></span></td><td class="wd">公积<span class="nw">金<span class="pm">↵</span></span></td><td class="wd">个人所得<span class="nw">税<span class="pm">↵</span></span></td><td class="wd">实发工<span class="nw">资<span class="pm">↵</span></span></td></tr>
            <tr><td class="wr2"><span class="pm">↵</span></td><td class="wr2"><span class="pm">↵</span></td><td class="wr2"><span class="pm">↵</span></td><td class="wr2"><span class="pm">↵</span></td><td class="wr2"><span class="pm">↵</span></td><td class="wr2"><span class="pm">↵</span></td><td class="wr2"><span class="pm">↵</span></td><td class="wr2"><span class="pm">↵</span></td><td class="wr2"><span class="pm">↵</span></td><td class="wr2"><span class="pm">↵</span></td><td class="wr2"><span class="pm">↵</span></td><td class="wr2"><span class="pm">↵</span></td><td class="wr2"><span class="pm">↵</span></td><td class="wr2"><span class="pm">↵</span></td></tr>
          </tbody>
        </table>
        <div class="wlast"><span class="pm">↵</span></div>
      </div>
    </div>
  </section>

  <div class="rf rf1"></div>
  <div class="rf rf2"></div>
  <svg class="arw" width="30" height="34"><polygon points="28,2 13,17 7,14 3,32 19,24 15,21" fill="#f83b3c"/></svg>
</main>
<script src="https://cdn.jsdelivr.net/npm/bootstrap@5.3.0/dist/js/bootstrap.bundle.min.js"></script>
</body>
</html>
